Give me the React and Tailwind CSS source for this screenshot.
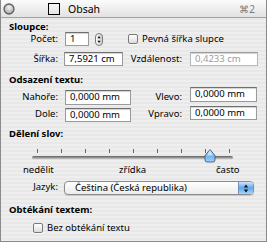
import React from 'react'

function Field({ value, className, muted }) {
  return (
    <div className={`${className} bg-white border border-[#9a9a9a] border-t-[#6f6f6f] shadow-[inset_0_1px_1px_rgba(0,0,0,0.18)] pl-[4px] flex items-center whitespace-nowrap ${muted ? 'text-[#9c9c9c] border-[#b8b8b8] border-t-[#9a9a9a]' : ''}`}>
      {value}
    </div>
  )
}

function Check({ className }) {
  return (
    <div className={`${className} w-[10px] h-[10px] rounded-[2px] border border-[#7a7a7a] bg-gradient-to-b from-white to-[#dcdcdc] shadow-[0_1px_0_rgba(255,255,255,0.7)]`} />
  )
}

function Stepper() {
  return (
    <svg width="8" height="13" viewBox="0 0 8 13" className="ml-[6px] mt-[1px]">
      <defs>
        <linearGradient id="st" x1="0" y1="0" x2="1" y2="0">
          <stop offset="0" stopColor="#ffffff" />
          <stop offset="1" stopColor="#c9c9c9" />
        </linearGradient>
      </defs>
      <rect x="0.5" y="0.5" width="7" height="12" rx="3.5" fill="url(#st)" stroke="#7b7b7b" />
      <path d="M4 3 L2.4 5.2 H5.6 Z" fill="#111" />
      <path d="M2.4 7.8 H5.6 L4 10 Z" fill="#111" />
    </svg>
  )
}

function Slider() {
  const ticks = [0, 1, 2, 3, 4, 5, 6, 7, 8]
  return (
    <svg width="265" height="25" viewBox="0 0 265 25" className="block">
      <defs>
        <linearGradient id="tr" x1="0" y1="0" x2="0" y2="1">
          <stop offset="0" stopColor="#5e5e5e" />
          <stop offset="0.5" stopColor="#9a9a9a" />
          <stop offset="1" stopColor="#d6d6d6" />
        </linearGradient>
        <linearGradient id="th" x1="0" y1="0" x2="0" y2="1">
          <stop offset="0" stopColor="#d9ecff" />
          <stop offset="0.5" stopColor="#6fb2f2" />
          <stop offset="1" stopColor="#9fd0ff" />
        </linearGradient>
      </defs>
      {ticks.map((i) => (
        <rect key={i} x={36 + i * 24} y="10" width="1" height="4" fill="#666" />
      ))}
      <rect x="31" y="17" width="201" height="3.5" rx="1.75" fill="url(#tr)" />
      <path d="M204 16.5 L209 10.5 L214 16.5 V21 Q214 23 212 23 H206 Q204 23 204 21 Z" fill="url(#th)" stroke="#4a5f78" strokeWidth="0.9" />
      <path d="M206 16.5 L209 12.8 L212 16.5 Z" fill="#ffffff" opacity="0.55" />
    </svg>
  )
}

function Select() {
  return (
    <div className="ml-[6px] w-[190px] h-[14px] rounded-[4px] border border-[#8c8c8c] bg-gradient-to-b from-white to-[#ececec] shadow-[0_1px_1px_rgba(0,0,0,0.15)] flex overflow-hidden">
      <div className="flex-1 pl-[10px] leading-[12px] whitespace-nowrap">Čeština (Česká republika)</div>
      <div className="w-[15px] h-full border-l border-[#6d8fb8] bg-gradient-to-b from-[#cfe6fd] via-[#5fa6ec] to-[#a8d6ff] flex items-center justify-center">
        <svg width="6" height="9" viewBox="0 0 6 9">
          <path d="M3 0.5 L0.8 3.4 H5.2 Z" fill="#111" />
          <path d="M0.8 5.6 H5.2 L3 8.5 Z" fill="#111" />
        </svg>
      </div>
    </div>
  )
}

export default function App() {
  return (
    <div className="w-[267px] h-[242px] flex flex-col border-x border-b border-[#8a8a8a] bg-[repeating-linear-gradient(to_bottom,#eeeeee_0px,#eeeeee_2px,#e8e8e8_2px,#e8e8e8_4px)] font-['Noto_Sans',sans-serif] text-[9.5px] text-black overflow-hidden">
      <div className="h-[18px] shrink-0 flex items-center border-b border-[#a3a3a3] bg-gradient-to-b from-[#fbfbfb] to-[#e2e2e2]">
        <svg width="12" height="12" viewBox="0 0 12 12" className="ml-[2px]">
          <defs>
            <radialGradient id="cb" cx="0.5" cy="0.35" r="0.6">
              <stop offset="0" stopColor="#f4f4f4" />
              <stop offset="1" stopColor="#a9a9a9" />
            </radialGradient>
          </defs>
          <circle cx="6" cy="6" r="5" fill="url(#cb)" stroke="#5f5f5f" strokeWidth="1.3" />
        </svg>
        <div className="ml-[33px] w-[12px] h-[12px] border border-black" />
        <div className="ml-[8px] text-[10.5px] leading-[12px]">Obsah</div>
        <div className="ml-auto mr-[11px] text-[10px] leading-[12px] text-[#7a7a7a]">⌘2</div>
      </div>

      <div className="pl-[8px] mt-[4px] h-[10px] leading-[10px] font-bold text-[9.5px]">Sloupce:</div>

      <div className="flex items-center h-[14px] shrink-0">
        <div className="w-[57px] text-right leading-[12px]">Počet:</div>
        <Field value="1" className="ml-[7px] w-[24px] h-[14px]" />
        <Stepper />
        <Check className="ml-[25px]" />
        <div className="ml-[4px] leading-[12px]">Pevná šířka slupce</div>
      </div>

      <div className="flex items-center h-[14px] mt-[6px] shrink-0">
        <div className="w-[57px] text-right leading-[12px]">Šířka:</div>
        <Field value="7,5921 cm" className="ml-[6px] w-[59px] h-[14px]" />
        <div className="w-[59px] text-right leading-[12px]">Vzdálenost:</div>
        <Field value="0,4233 cm" muted className="ml-[8px] w-[68px] h-[14px]" />
      </div>

      <div className="pl-[8px] mt-[9px] h-[10px] leading-[10px] font-bold text-[9.5px]">Odsazení textu:</div>

      <div className="flex items-start h-[18px] mt-[2px] shrink-0">
        <div className="w-[57px] mt-[4px] text-right leading-[12px]">Nahoře:</div>
        <Field value="0,0000 mm" className="ml-[7px] mt-[3px] w-[66px] h-[15px]" />
        <div className="w-[51px] mt-[4px] text-right leading-[12px]">Vlevo:</div>
        <Field value="0,0000 mm" className="ml-[8px] w-[67px] h-[15px]" />
      </div>

      <div className="flex items-start h-[16px] mt-[1px] shrink-0">
        <div className="w-[57px] mt-[2px] text-right leading-[12px]">Dole:</div>
        <Field value="0,0000 mm" className="ml-[7px] mt-[2px] w-[66px] h-[14px]" />
        <div className="w-[51px] mt-[2px] text-right leading-[12px]">Vpravo:</div>
        <Field value="0,0000 mm" className="ml-[8px] w-[67px] h-[14px]" />
      </div>

      <div className="pl-[8px] mt-[7px] h-[10px] leading-[10px] font-bold text-[9.5px]">Dělení slov:</div>

      <Slider />

      <div className="flex h-[12px] leading-[12px] pl-[22px] shrink-0">
        <div className="w-[96px]">nedělit</div>
        <div className="w-[97px]">zřídka</div>
        <div>často</div>
      </div>

      <div className="flex items-start h-[14px] mt-[5px] shrink-0">
        <div className="w-[57px] text-right leading-[12px]">Jazyk:</div>
        <Select />
      </div>

      <div className="pl-[8px] mt-[10px] h-[10px] leading-[10px] font-bold text-[9.5px]">Obtékání textem:</div>

      <div className="flex items-start h-[11px] mt-[7px] shrink-0">
        <Check className="ml-[32px] mt-[1px]" />
        <div className="ml-[4px] leading-[12px]">Bez obtékání textu</div>
      </div>
    </div>
  )
}
